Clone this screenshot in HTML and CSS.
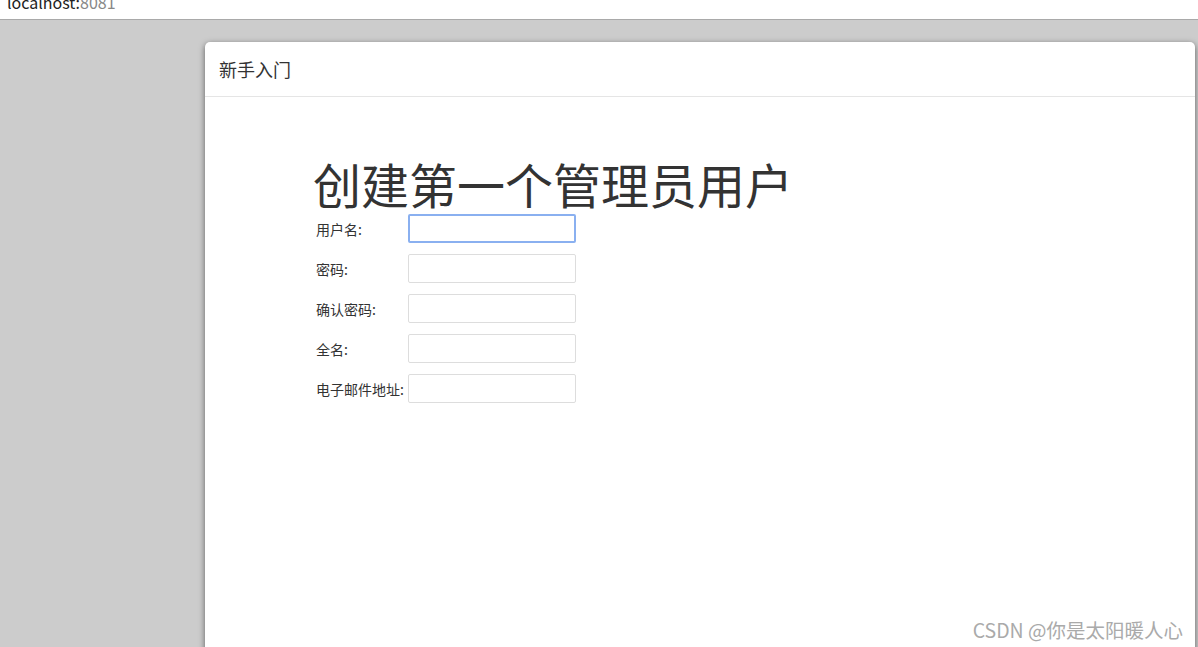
FILE: index.html
```html
<!DOCTYPE html>
<html lang="zh-CN">
<head>
  <meta charset="UTF-8" />
  <title>新手入门</title>
  <link rel="stylesheet" href="styles.css">
</head>
<body>

  <div class="urlbar">
    <div class="url"><span class="host">localhost:</span><span class="port">8081</span></div>
  </div>

  <div class="modal">
    <div class="modal-header">
      <h4>新手入门</h4>
    </div>
    <div class="modal-body">
      <h1>创建第一个管理员用户</h1>
      <form class="setup-form">
        <div class="row">
          <label for="username">用户名:</label>
          <input type="text" id="username" class="focused" />
        </div>
        <div class="row">
          <label for="password1">密码:</label>
          <input type="password" id="password1" />
        </div>
        <div class="row">
          <label for="password2">确认密码:</label>
          <input type="password" id="password2" />
        </div>
        <div class="row">
          <label for="fullname">全名:</label>
          <input type="text" id="fullname" />
        </div>
        <div class="row">
          <label for="email">电子邮件地址:</label>
          <input type="text" id="email" />
        </div>
      </form>
    </div>
  </div>

  <div class="watermark">CSDN @你是太阳暖人心</div>

</body>
</html>
```

FILE: styles.css
```css
body {
  margin: 0;
  padding: 0;
  background: #cccccc;
  font-family: "Noto Sans CJK SC", "Noto Sans", sans-serif;
  color: #333;
  height: 647px;
  overflow: hidden;
}

.urlbar {
  height: 19px;
  background: #fff;
  border-bottom: 1px solid #a9a9a9;
  padding-left: 7px;
  overflow: hidden;
}

.url {
  font-size: 16px;
  line-height: 16px;
  margin-top: -6px;
}

.url .host {
  color: #222;
}

.url .port {
  color: #888;
}

.modal {
  margin: 22px 0 0 205px;
  width: 990px;
  height: 620px;
  background: #fff;
  border-radius: 5px 5px 0 0;
  box-shadow: 0 2px 6px rgba(0, 0, 0, 0.55);
}

.modal-header {
  height: 54px;
  border-bottom: 1px solid #e5e5e5;
  display: flex;
  align-items: center;
  padding-left: 14px;
}

.modal-header h4 {
  margin: 0;
  font-size: 18px;
  font-weight: normal;
  color: #333;
}

.modal-body {
  padding: 58px 0 0 108px;
}

.modal-body h1 {
  margin: 0 0 3px;
  font-size: 48px;
  font-weight: normal;
  line-height: 56px;
  color: #333;
}

.setup-form {
  display: flex;
  flex-direction: column;
  gap: 11px;
  margin-left: 3px;
}

.row {
  display: flex;
  align-items: center;
}

.row label {
  width: 92px;
  font-size: 14px;
  color: #333;
}

.row input {
  width: 168px;
  height: 29px;
  box-sizing: border-box;
  border: 1px solid #dddddd;
  border-radius: 2px;
  outline: none;
  margin: 0;
}

.row input.focused {
  border: 2px solid #8ab0f0;
}

.watermark {
  position: absolute;
  right: 15px;
  top: 615px;
  font-size: 19.5px;
  color: #aaa;
}
```
